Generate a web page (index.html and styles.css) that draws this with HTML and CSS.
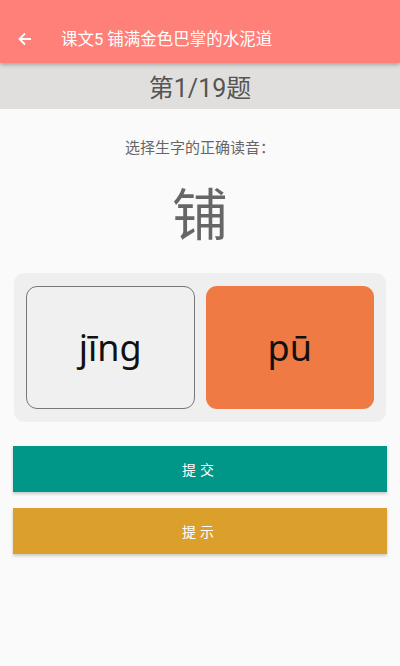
FILE: index.html
```html
<!DOCTYPE html>
<html lang="zh">
<head>
<meta charset="utf-8">
<link rel="stylesheet" href="styles.css">
</head>
<body>
<header class="appbar">
  <svg class="back" width="16" height="16" viewBox="0 0 16 16"><path d="M14 8H2.5M8 2.5L2.5 8L8 13.5" fill="none" stroke="#fff" stroke-width="1.8"/></svg>
  <span class="title">课文5 铺满金色巴掌的水泥道</span>
</header>
<div class="counter">第1/19题</div>
<main class="content">
  <p class="prompt">选择生字的正确读音：</p>
  <div class="hanzi">铺</div>
  <div class="options">
    <div class="opt opt-plain">jīng</div>
    <div class="opt opt-selected">pū</div>
  </div>
  <button class="btn btn-submit">提交</button>
  <button class="btn btn-hint">提示</button>
</main>
</body>
</html>
```
FILE: styles.css
```css
* { box-sizing: border-box; }
html, body { margin: 0; padding: 0; }
body {
  width: 400px; height: 666px; overflow: hidden;
  background: #fafafa;
  font-family: Roboto, "Noto Sans CJK SC", sans-serif;
}
.appbar {
  height: 63px;
  background: #ff8079;
  display: flex; align-items: flex-end;
  padding: 0 0 12px 17px;
  box-shadow: 0 2px 4px rgba(0,0,0,0.25);
  position: relative; z-index: 2;
}
.back { margin-bottom: 4px; }
.title {
  margin-left: 28px;
  color: #fff; font-size: 16.5px; line-height: 22px;
}
.counter {
  height: 46px; background: #e0dfdd;
  display: flex; align-items: center; justify-content: center;
  color: #555; font-size: 25px;
}
.content { padding: 0 13px; display: flex; flex-direction: column; align-items: stretch; }
.prompt {
  margin: 29px 0 0; text-align: center; color: #666; font-size: 15px; line-height: 20px;
}
.hanzi {
  margin-top: 20px; text-align: center; color: #666; font-size: 56px; line-height: 66px;
  font-family: "Noto Sans CJK SC", sans-serif;
}
.options {
  margin: 29px 1px 0;
  background: #efefef; border-radius: 10px;
  padding: 13px 12px;
  display: grid; grid-template-columns: 1fr 1fr; gap: 11px;
}
.opt {
  height: 123px; border-radius: 11px;
  display: flex; align-items: center; justify-content: center;
  font-size: 36px; color: #111;
  font-family: "Noto Sans", sans-serif;
}
.opt-plain { background: #f0f0f0; border: 1px solid #777; }
.opt-selected { background: #ef7a43; }
.btn {
  display: block; width: 100%; height: 46px; border: 0; border-radius: 0;
  color: #fff; font-size: 14px; letter-spacing: 4px;
  font-family: "Noto Sans CJK SC", sans-serif;
  box-shadow: 0 2px 3px rgba(0,0,0,0.2);
  padding: 0;
}
.btn-submit { margin-top: 24px; background: #009688; }
.btn-hint { margin-top: 16px; background: #daa02b; }
```
